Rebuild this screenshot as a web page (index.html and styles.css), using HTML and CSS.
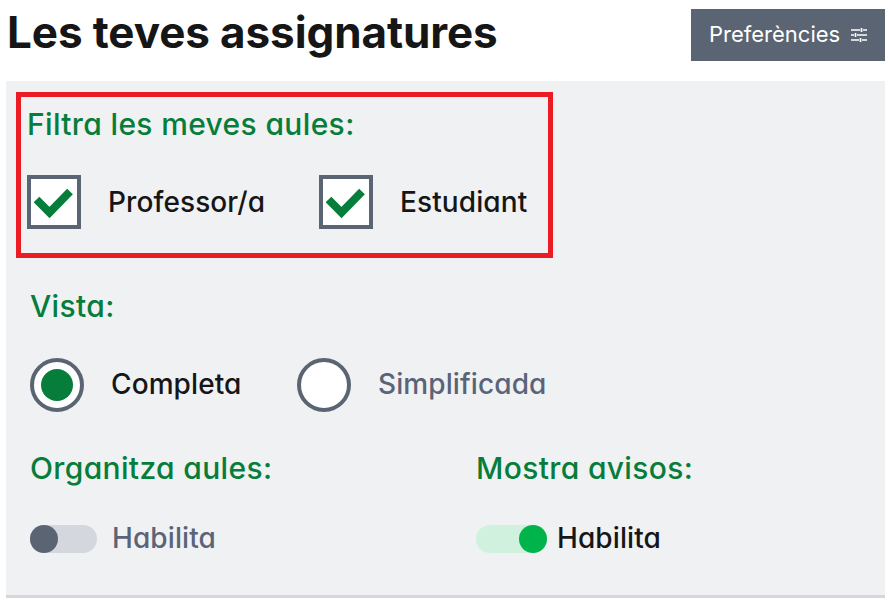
FILE: index.html
```html
<!DOCTYPE html>
<html lang="ca">
<head>
    <meta charset="UTF-8">
    <meta name="viewport" content="width=device-width, initial-scale=1.0">
    <title>Les teves assignatures</title>
    <link rel="stylesheet" href="styles.css">
</head>
<body>

    <header class="top-bar">
        <h1>Les teves assignatures</h1>
        <button type="button" class="prefs-btn">
            Preferències
            <svg class="prefs-icon" viewBox="0 0 16 16" width="16" height="16" aria-hidden="true">
                <path d="M0 3h9M12 3h4M10.5 1v4M0 8h3M6 8h10M4.5 6v4M0 13h8M11 13h5M9.5 11v4" fill="none" stroke="currentColor" stroke-width="1.7"/>
            </svg>
        </button>
    </header>

    <main class="panel">
        <section class="filter-box">
            <h2 class="group-title">Filtra les meves aules:</h2>
            <div class="options filter-options">
                <div class="option option-prof">
                    <span class="check">
                        <svg viewBox="0 0 46 46" width="46" height="46" aria-hidden="true">
                            <path d="M5.5 20.5l13 13L39 12.5" fill="none" stroke="#067d3a" stroke-width="8"/>
                        </svg>
                    </span>
                    <span class="option-label">Professor/a</span>
                </div>
                <div class="option">
                    <span class="check">
                        <svg viewBox="0 0 46 46" width="46" height="46" aria-hidden="true">
                            <path d="M5.5 20.5l13 13L39 12.5" fill="none" stroke="#067d3a" stroke-width="8"/>
                        </svg>
                    </span>
                    <span class="option-label">Estudiant</span>
                </div>
            </div>
        </section>

        <section class="view-group">
            <h2 class="group-title">Vista:</h2>
            <div class="options view-options">
                <div class="option option-full">
                    <span class="radio radio-on"></span>
                    <span class="option-label">Completa</span>
                </div>
                <div class="option">
                    <span class="radio"></span>
                    <span class="option-label muted">Simplificada</span>
                </div>
            </div>
        </section>

        <div class="switch-row">
            <section class="switch-group">
                <h2 class="group-title">Organitza aules:</h2>
                <div class="switch-line">
                    <span class="switch"><span class="knob"></span></span>
                    <span class="option-label muted">Habilita</span>
                </div>
            </section>
            <section class="switch-group">
                <h2 class="group-title">Mostra avisos:</h2>
                <div class="switch-line switch-line-on">
                    <span class="switch switch-on"><span class="knob"></span></span>
                    <span class="option-label">Habilita</span>
                </div>
            </section>
        </div>
    </main>

</body>
</html>
```

FILE: styles.css
```css
/* Base */
body {
    font-family: Inter, "Noto Sans", sans-serif;
    font-feature-settings: "cv11";
    background-color: #fff;
    color: #161616;
    margin: 0;
    padding: 0 5px 0 6px;
}

/* Top bar */
.top-bar {
    display: flex;
    justify-content: space-between;
    align-items: flex-start;
    height: 81px;
}

h1 {
    margin: 5px 0 0 1px;
    font-size: 44px;
    line-height: 54px;
    letter-spacing: -0.1px;
    font-weight: 700;
    font-feature-settings: normal;
}

.prefs-btn {
    display: flex;
    align-items: center;
    gap: 11px;
    box-sizing: border-box;
    width: 194px;
    height: 52px;
    margin-top: 9px;
    padding: 0 0 3px 18px;
    border: none;
    background-color: #5a6472;
    color: #fff;
    font-family: inherit;
    font-feature-settings: normal;
    font-size: 22px;
}

.prefs-icon {
    margin-top: 2px;
}

/* Grey panel */
.panel {
    box-sizing: border-box;
    background-color: #f0f1f3;
    border-bottom: 3px solid #d5d7dd;
    height: 517px;
    padding: 11px 0 0 10px;
}

.filter-box {
    box-sizing: border-box;
    width: 537px;
    height: 166px;
    border: 5px solid #ed1c24;
    padding: 0 0 0 6px;
}

.group-title {
    margin: 0;
    color: #067d3a;
    font-size: 30px;
    line-height: 36px;
    letter-spacing: 0.35px;
    font-weight: 500;
}

.filter-box .group-title {
    margin-top: 9px;
}

.options {
    display: flex;
}

.filter-options {
    margin-top: 33px;
}

.option {
    display: flex;
    align-items: center;
}

.option-prof {
    width: 292px;
}

.option-label {
    font-size: 28px;
    letter-spacing: 0.1px;
    line-height: 32px;
    font-weight: 500;
}

.view-options .option-label,
.switch-line .option-label {
    margin-bottom: 2px;
}

.muted {
    color: #5a6478;
}

/* Checkboxes */
.check {
    display: block;
    width: 46px;
    height: 46px;
    border: 4px solid #5a6472;
    background-color: #fff;
    margin-right: 27px;
}

.check svg {
    display: block;
}

/* Radios */
.view-group {
    margin: 30px 0 0 14px;
}

.view-options {
    margin-top: 34px;
}

.option-full {
    width: 267px;
}

.radio {
    display: flex;
    align-items: center;
    justify-content: center;
    box-sizing: border-box;
    width: 54px;
    height: 54px;
    border: 4px solid #5a6472;
    border-radius: 50%;
    background-color: #fff;
    margin-right: 27px;
}

.radio-on::before {
    content: "";
    width: 32px;
    height: 32px;
    border-radius: 50%;
    background-color: #067d3a;
}

/* Switches */
.switch-row {
    display: flex;
    margin: 38px 0 0 14px;
}

.switch-group {
    flex: 0 0 446px;
}

.switch-line {
    display: flex;
    align-items: center;
    gap: 15px;
    margin-top: 39px;
    height: 28px;
}

.switch-line-on {
    gap: 10px;
}

.switch {
    display: flex;
    width: 67px;
    height: 28px;
    border-radius: 14px;
    background-color: #d5d7df;
}

.knob {
    width: 28px;
    height: 28px;
    border-radius: 50%;
    background-color: #5a6472;
}

.switch-on {
    width: 71px;
    justify-content: flex-end;
    background-color: #d0f1de;
}

.switch-on .knob {
    background-color: #00b34a;
}
```
